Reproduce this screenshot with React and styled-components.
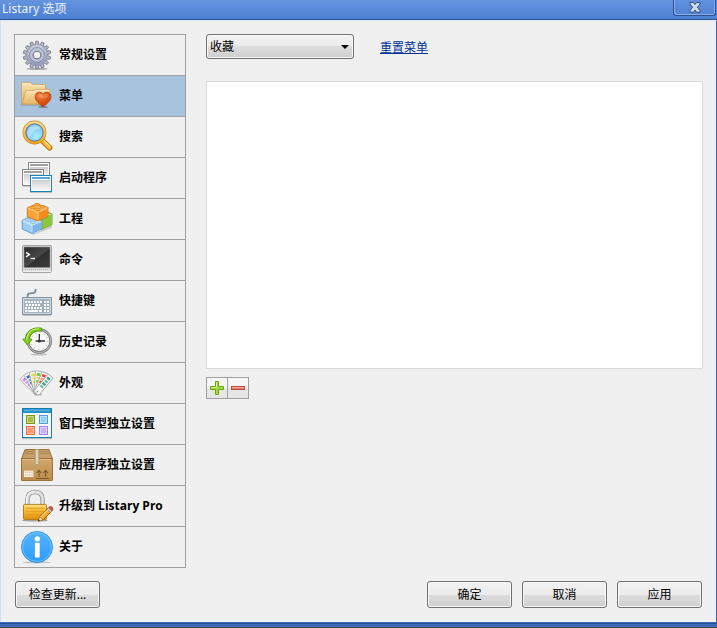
import React, { useState } from 'react';
import styled, { createGlobalStyle } from 'styled-components';

const GlobalStyle = createGlobalStyle`
    * {
        box-sizing:border-box;
    }
    body {
        margin:0;
        background:#f0f0f0;
        color:#000;
        font-family:"Noto Sans", "Noto Sans CJK SC", sans-serif;
        font-size:12px;
        line-height:16px;
    }
    button, select {
        font-family:inherit;
        font-size:12px;
        line-height:16px;
        color:#000;
    }
`;
const Window = styled.div`
    min-height:100vh;
    display:flex;
    flex-direction:column;
`;
const TitleBar = styled.header`
    height:20px;
    display:flex;
    justify-content:space-between;
    align-items:flex-start;
    padding:0 1px 0 2px;
    background:linear-gradient(#6594df, #4e80d2);
    border-bottom:1px solid #2f5596;
`;
const Title = styled.h1`
    margin:0;
    font-size:12px;
    line-height:18px;
    font-weight:400;
    color:#edf3ff;
`;
const CloseButton = styled.button`
    width:43px;
    height:16px;
    display:flex;
    justify-content:center;
    align-items:center;
    padding:0;
    background:linear-gradient(#6191dd, #5284d4);
    border:1px solid #2d5191;
    border-top:0;
    border-radius:0 0 3px 3px;
    box-shadow:inset 1px -1px 0 #86abe8, inset -1px 0 0 #86abe8;
`;
const Content = styled.div`
    flex:1;
    display:flex;
    flex-direction:column;
    gap:13px;
    padding:13px 13px 14px;
    border-top:1px solid #dfe9f8;
    border-left:1px solid #cfe0f8;
    border-right:1px solid #3a6bb8;
`;
const Columns = styled.div`
    flex:1;
    display:grid;
    grid-template-columns:172px 1fr;
    align-items:start;
    column-gap:20px;
`;
const SideNav = styled.nav`
    border:1px solid #a0a0a0;
    border-bottom:0;
`;
const NavItem = styled.button`
    width:100%;
    height:41px;
    display:flex;
    align-items:center;
    gap:6px;
    padding:0 0 0 6px;
    border:0;
    border-bottom:1px solid #a0a0a0;
    background:${props => props.$active ? "#a8c3dd" : "#f0f0f0"};
    font-family:"Open Sans", "Noto Sans CJK SC", sans-serif;
    font-weight:700;
    text-align:left;
    white-space:nowrap;
`;
const NavIcon = styled.svg`
    flex:none;
    width:32px;
    height:32px;
    overflow:visible;
`;
const Panel = styled.main`
    display:flex;
    flex-direction:column;
`;
const Toolbar = styled.div`
    display:flex;
    align-items:center;
    gap:26px;
    margin-bottom:22px;
`;
const SelectBox = styled.div`
    width:148px;
    display:grid;
    align-items:center;
`;
const Select = styled.select`
    grid-area:1 / 1;
    width:100%;
    height:25px;
    appearance:none;
    padding:1px 20px 0 3px;
    border:1px solid #707070;
    border-radius:3px;
    background:linear-gradient(#f2f2f2 0%, #ebebeb 50%, #dddddd 50%, #cfcfcf 100%);
    box-shadow:inset 0 0 0 1px #f8f8f8;
`;
const SelectArrow = styled.svg`
    grid-area:1 / 1;
    justify-self:end;
    width:8px;
    height:4px;
    margin-right:5px;
    pointer-events:none;
`;
const ResetLink = styled.a`
    padding-top:2px;
    color:#003399;
    text-decoration:underline;
    text-underline-offset:1px;
`;
const ItemList = styled.div`
    min-height:288px;
    background:#fff;
    border:1px solid #dadada;
`;
const ListActions = styled.div`
    width:43px;
    display:flex;
    margin-top:8px;
    border:1px solid #a0a0a0;
`;
const ListButton = styled.button`
    flex:1;
    height:20px;
    display:flex;
    align-items:center;
    justify-content:center;
    padding:0;
    border:0;
    background:linear-gradient(#f6f6f6 50%, #e6e6e6 50%);
    & + & {
        border-left:1px solid #a0a0a0;
    }
`;
const Footer = styled.footer`
    display:flex;
    justify-content:space-between;
    padding:0 1px;
`;
const FooterGroup = styled.div`
    display:flex;
    gap:10px;
`;
const PushButton = styled.button`
    width:85px;
    height:27px;
    padding:0;
    border:1px solid #707070;
    border-radius:3px;
    background:linear-gradient(#f2f2f2 0%, #ebebeb 50%, #dddddd 50%, #cfcfcf 100%);
    box-shadow:inset 0 0 0 1px #f8f8f8;
`;
const WindowEdge = styled.div`
    height:6px;
    background:linear-gradient(#3c6cb9 1px, #274f94 1px, #274f94 2px, #3c6cb9 2px);
    border-bottom:1px solid #454545;
`;

const GearIcon = () => {
    const teeth = Array.from({ length: 14 }, (_, i) => i * 360 / 14);
    return (
        <NavIcon viewBox="0 0 32 32" aria-hidden="true">
            <defs>
                <linearGradient id="gear" x1="0" y1="0" x2="0" y2="1">
                    <stop offset="0" stopColor="#cdd1dc"/>
                    <stop offset="1" stopColor="#8f98b5"/>
                </linearGradient>
            </defs>
            <ellipse cx="16" cy="29.8" rx="11" ry="1.3" fill="#666" opacity=".5"/>
            {teeth.map(a => (
                <path key={a} d="M14 6.4 L14.8 2.2 H17.2 L18 6.4 Z" fill="#b0b6c7" stroke="#747a8c" strokeWidth=".8" transform={`rotate(${a} 16 16)`}/>
            ))}
            <circle cx="16" cy="16" r="10.4" fill="url(#gear)" stroke="#8f96ab" strokeWidth=".6"/>
            <circle cx="16" cy="16" r="7.4" fill="none" stroke="#7d87a8" strokeWidth=".9"/>
            <circle cx="16" cy="16" r="5.8" fill="none" stroke="#bfc6d9" strokeWidth="1.8"/>
            <circle cx="16" cy="16" r="3.8" fill="#f0f0f0" stroke="#757a88" strokeWidth="1.1"/>
        </NavIcon>
    )
}
const FolderIcon = () => (
    <NavIcon viewBox="0 0 32 32" aria-hidden="true">
        <defs>
            <linearGradient id="folder" x1="0" y1="0" x2="0" y2="1">
                <stop offset="0" stopColor="#fbe3b0"/>
                <stop offset="1" stopColor="#e3b566"/>
            </linearGradient>
            <radialGradient id="heart" cx=".4" cy=".25" r=".8">
                <stop offset="0" stopColor="#f08a45"/>
                <stop offset=".5" stopColor="#dc5616"/>
                <stop offset="1" stopColor="#b93a06"/>
            </radialGradient>
        </defs>
        <path d="M-1 24.5 H22 V25.5 H0 Z" fill="#5e7d9a" opacity=".6"/>
        <path d="M.6 23.8 V3.3 Q.6 2.4 1.5 2.4 H9.5 L11.4 4.6 H23.6 Q24.6 4.6 24.6 5.6 V23.8 Z" fill="url(#folder)" stroke="#d4a35c" strokeWidth=".9"/>
        <path d="M1.6 3.6 H9 L11 5.6 H23.6" fill="none" stroke="#fff0cc" strokeWidth=".9"/>
        <path d="M1 24.2 L4.6 10.6 H13 L14.4 9.4 H29.4 L26 24.2 Z" fill="url(#folder)" stroke="#cf9d55" strokeWidth=".8"/>
        <path d="M5.4 11.6 H13.4 L14.8 10.4 H28.4" fill="none" stroke="#fff0cc" strokeWidth=".9"/>
        <ellipse cx="22" cy="27" rx="5" ry="1" fill="#444" opacity=".45"/>
        <path d="M22 27 C19 24.2 14.1 21.2 14.1 16.7 C14.1 11.8 20 10.6 22 14.2 C24 10.6 30 11.8 30 16.7 C30 21.2 25 24.2 22 27 Z" fill="url(#heart)" stroke="#b94312" strokeWidth=".7"/>
        <path d="M15.6 16.5 Q16 13.6 18.5 13.6 Q21 14 22 16.6 Q23.5 13.6 26 13.6 Q28.4 14 28.5 16.5 Q22 19.5 15.6 16.5 Z" fill="#fff" opacity=".15"/>
    </NavIcon>
)
const SearchIcon = () => (
    <NavIcon viewBox="0 0 32 32" aria-hidden="true">
        <defs>
            <radialGradient id="lens" cx=".6" cy=".7" r=".7">
                <stop offset="0" stopColor="#a9ecff"/>
                <stop offset="1" stopColor="#6ab4f1"/>
            </radialGradient>
            <linearGradient id="ring" x1="0" y1="0" x2="0" y2="1">
                <stop offset="0" stopColor="#ffd983"/>
                <stop offset="1" stopColor="#f2a31c"/>
            </linearGradient>
        </defs>
        <path d="M21.2 19.4 L28.6 26.8" stroke="#b57418" strokeWidth="5.6" strokeLinecap="round"/>
        <path d="M21.2 19.2 L28.4 26.4" stroke="#ffb52e" strokeWidth="4" strokeLinecap="round"/>
        <path d="M22.4 19.2 L29 25.8" stroke="#ffe39a" strokeWidth="1.2" strokeLinecap="round"/>
        <path d="M19.8 17.8 L21.8 19.8" stroke="#8b8b8b" strokeWidth="3"/>
        <circle cx="13.5" cy="11.5" r="10.2" fill="url(#lens)" stroke="#b98732" strokeWidth="3.4"/>
        <circle cx="13.5" cy="11.5" r="10.2" fill="none" stroke="url(#ring)" strokeWidth="2.3"/>
        <circle cx="13.5" cy="11.5" r="8.6" fill="none" stroke="#4a7dad" strokeWidth=".9"/>
        <path d="M6.3 12 Q6.3 4.6 13.5 4.2 Q18 4.4 19.6 7.8 Q11.5 8 8.8 16.5 Q6.6 15 6.3 12 Z" fill="#fff" opacity=".35"/>
    </NavIcon>
)
const WindowsIcon = () => (
    <NavIcon viewBox="0 0 32 32" aria-hidden="true">
        <defs>
            <linearGradient id="pane" x1="0" y1="0" x2="0" y2="1">
                <stop offset="0" stopColor="#cfcfcf"/>
                <stop offset="1" stopColor="#f8f8f8"/>
            </linearGradient>
        </defs>
        <rect x="7.5" y=".5" width="21" height="16" fill="#fff" stroke="#868686"/>
        <rect x="9" y="2" width="18" height="2" fill="#a2a2a2"/>
        <rect x="9" y="5" width="18" height="10" fill="url(#pane)"/>
        <rect x="1.5" y="7.5" width="21" height="16" fill="#fff" stroke="#868686"/>
        <rect x="3" y="9" width="18" height="2" fill="#a2a2a2"/>
        <rect x="3" y="12" width="18" height="10" fill="url(#pane)"/>
        <path d="M2 24.5 H9" stroke="#000" opacity=".15"/>
        <rect x="9.5" y="13.5" width="21" height="16" fill="#fff" stroke="#1d83b8"/>
        <rect x="11" y="15" width="18" height="2" fill="#55a9d8"/>
        <rect x="11" y="18" width="18" height="10" fill="url(#pane)"/>
        <path d="M9 30.5 H31" stroke="#000" opacity=".2"/>
    </NavIcon>
)
const BricksIcon = () => (
    <NavIcon viewBox="0 0 32 32" aria-hidden="true">
        <path d="M2 27 L11 31 L31 22 L31 25 L12 32 Z" fill="#000" opacity=".15"/>
        <path d="M17 11 L25 8.4 L31 11 V21.6 L20 26.6 Z" fill="#8fc63a" stroke="#5c9320" strokeWidth=".8"/>
        <path d="M20 16.4 L31 11.4 V21.6 L20 26.6 Z" fill="#8cc63c"/>
        <path d="M23 11.8 L27.4 10 L30.4 11.2 L25 13.8 Z" fill="#c8ea90"/>
        <path d="M1.2 17.4 L9.6 13.4 L21 18 V25.6 L11 30.4 L1.2 26 Z" fill="#9ccdf5" stroke="#4a8ac2" strokeWidth=".8"/>
        <path d="M1.6 17.6 L9.6 14 L20.6 18.2 L11 22 Z" fill="#c9e5fb"/>
        <path d="M11 22 L20.6 18.3 V25.4 L11 30 Z" fill="#7bb5ea"/>
        <ellipse cx="7" cy="17" rx="2.8" ry="1.4" fill="#b4dafa" stroke="#6aa9dd" strokeWidth=".6"/>
        <ellipse cx="12.3" cy="19.2" rx="2.8" ry="1.4" fill="#b4dafa" stroke="#6aa9dd" strokeWidth=".6"/>
        <path d="M1.8 18.2 L11 22.4 L20.4 18.6 M11 22.4 V29.4" fill="none" stroke="#e2f2ff" strokeWidth=".7"/>
        <path d="M6.3 4.8 L15.4 .8 L27 4.4 V13.4 L17 18 L6.3 14 Z" fill="#fba437" stroke="#c56a10" strokeWidth=".8"/>
        <path d="M6.8 5 L15.4 1.4 L26.6 4.6 L17 9 Z" fill="#ffbd62"/>
        <path d="M17 9 L26.6 4.8 V13.2 L17 17.6 Z" fill="#f28c1d"/>
        <ellipse cx="11.6" cy="4.6" rx="2.6" ry="1.3" fill="#ffb04a" stroke="#d27a1a" strokeWidth=".7"/>
        <ellipse cx="16" cy="1.7" rx="2.6" ry="1.3" fill="#ffb04a" stroke="#d27a1a" strokeWidth=".7"/>
        <ellipse cx="21.4" cy="3.8" rx="2.6" ry="1.3" fill="#ffb04a" stroke="#d27a1a" strokeWidth=".7"/>
        <ellipse cx="16.8" cy="6.4" rx="2.6" ry="1.3" fill="#ffb04a" stroke="#d27a1a" strokeWidth=".7"/>
        <path d="M7 5.4 L17 9.4 L26.4 5.2 M17 9.4 V17.2" fill="none" stroke="#ffd596" strokeWidth=".8"/>
    </NavIcon>
)
const TerminalIcon = () => (
    <NavIcon viewBox="0 0 32 32" aria-hidden="true">
        <defs>
            <linearGradient id="screen" x1="0" y1="0" x2="1" y2="1">
                <stop offset="0" stopColor="#2a2a2a"/>
                <stop offset=".5" stopColor="#484848"/>
                <stop offset=".55" stopColor="#303030"/>
                <stop offset="1" stopColor="#3b3b3b"/>
            </linearGradient>
        </defs>
        <rect x="1.5" y="1.5" width="29" height="27" rx="1.5" fill="#dadada" stroke="#a6a6a6"/>
        <rect x="3" y="3" width="26" height="20.5" fill="url(#screen)" stroke="#8a8a8a" strokeWidth=".6"/>
        <path d="M4 25.5 H28" stroke="#b4b4b4" strokeDasharray="1 1"/>
        <path d="M2 27.3 H30" stroke="#f6f6f6"/>
        <path d="M5 8.4 L8.4 10.6 L5 12.8" fill="none" stroke="#fff" strokeWidth="1.4"/>
        <path d="M9.6 14.5 H14" stroke="#fff" strokeWidth="1.3"/>
    </NavIcon>
)
const KeyboardIcon = () => (
    <NavIcon viewBox="0 0 32 32" aria-hidden="true">
        <path d="M6.6 12 V10.4 Q6.6 8.6 9 8.4 L12.2 8.2 Q14.6 8 14.6 4" fill="none" stroke="#7e8a92" strokeWidth="1.8"/>
        <rect x="1.5" y="12.5" width="29" height="17" fill="#a5b4be" stroke="#8495a1"/>
        <rect x="2.5" y="13.5" width="27" height="15" fill="none" stroke="#cfd9df"/>
        <path d="M2 30.6 H30" stroke="#000" opacity=".2"/>
        <path d="M4 17 H21 M5 20 H20 M4 23 H21" stroke="#fff" strokeWidth="2" strokeDasharray="2 1"/>
        <path d="M4 26 H6.4 M7.4 26 H17 M18 26 H21" stroke="#fff" strokeWidth="1.8"/>
        <path d="M23 17 H28 M23 20 H28 M23 23 H28 M23 26 H28" stroke="#fff" strokeWidth="2" strokeDasharray="2 1"/>
        <path d="M22 15 V28" stroke="#8fa0ac" strokeWidth=".9"/>
    </NavIcon>
)
const HistoryIcon = () => (
    <NavIcon viewBox="0 0 32 32" aria-hidden="true">
        <ellipse cx="18" cy="28.4" rx="8" ry="1.2" fill="#000" opacity=".2"/>
        <circle cx="18.3" cy="15" r="11.4" fill="#f6f6f6" stroke="#777" strokeWidth="2.6"/>
        <circle cx="18.3" cy="15" r="11.4" fill="none" stroke="#b9b9b9" strokeWidth="1.1"/>
        <circle cx="18.3" cy="15" r="8.4" fill="none" stroke="#909090" strokeWidth="1" strokeDasharray=".8 3.6"/>
        <path d="M18.3 8 V15 M14.6 15 H24" fill="none" stroke="#333" strokeWidth="1.3"/>
        <circle cx="18.3" cy="15" r="1.6" fill="#333"/>
        <path d="M20.8 2.2 C11.6 .6 4.6 5.2 4.4 13.2 L1.8 13.2 L6.4 19 L11 13.2 L8.2 13.2 C8.6 7.8 13 4.6 20.8 4.8 Z" fill="#86cf18" stroke="#4a9a08" strokeWidth=".9"/>
        <path d="M18 3 C11 2.4 6.2 6.4 5.8 13.8" fill="none" stroke="#cff27a" strokeWidth="1"/>
    </NavIcon>
)
const swatches = [
    { angle: -46, color: "#e07bd8", alt: "#c79ae6" },
    { angle: -30, color: "#4b63d8", alt: "#6fa0ea" },
    { angle: -14, color: "#f4dc2c", alt: "#f2ee7b" },
    { angle: 4, color: "#79cc22", alt: "#f2e24a" },
    { angle: 22, color: "#ee3d3d", alt: "#f58b7a" },
    { angle: 40, color: "#3fa682", alt: "#5fbf9d" },
];
const SwatchIcon = () => (
    <NavIcon viewBox="0 0 32 32" aria-hidden="true">
        <ellipse cx="17" cy="27.4" rx="4" ry="1.2" fill="#000" opacity=".25"/>
        {swatches.map(s => (
            <g key={s.angle} transform={`rotate(${s.angle} 16 25)`}>
                <rect x="13" y="4" width="6.4" height="22.6" rx="1" fill="#fafafa" stroke="#9da3a3" strokeWidth=".8"/>
                <path d="M14.4 7.4 H18 M14.4 14.4 H18" stroke={s.color} strokeWidth="2.6"/>
                <path d="M14.4 11 H18 M14.4 17.8 H18" stroke={s.alt} strokeWidth="2.2"/>
            </g>
        ))}
        <circle cx="16.4" cy="24.6" r=".9" fill="#999"/>
    </NavIcon>
)
const tiles = [
    { x: 5.5, y: 7.5, fill: "#a9bf45", stroke: "#7b9a11" },
    { x: 18.5, y: 7.5, fill: "#93cdf8", stroke: "#4a9fe0" },
    { x: 5.5, y: 18.5, fill: "#ff9673", stroke: "#f0683c" },
    { x: 18.5, y: 18.5, fill: "#c9b1fb", stroke: "#a183ee" },
];
const WindowTypeIcon = () => (
    <NavIcon viewBox="0 0 32 32" aria-hidden="true">
        <path d="M1 30.7 H31" stroke="#000" opacity=".25"/>
        <rect x="1.5" y=".5" width="29" height="29" fill="#f7f7fb" stroke="#177db0"/>
        <rect x="2" y="1" width="28" height="4" fill="#2592cc"/>
        <path d="M3 2.2 H29" stroke="#71bee6"/>
        {tiles.map(t => (
            <g key={t.fill}>
                <rect x={t.x} y={t.y} width="8" height="8" fill={t.fill} stroke={t.stroke}/>
                <rect x={t.x + 1} y={t.y + 1} width="6" height="6" fill="none" stroke="#fff" strokeOpacity=".4"/>
            </g>
        ))}
    </NavIcon>
)
const BoxIcon = () => (
    <NavIcon viewBox="0 0 32 32" aria-hidden="true">
        <defs>
            <linearGradient id="carton" x1="0" y1="0" x2="0" y2="1">
                <stop offset="0" stopColor="#d0a870"/>
                <stop offset="1" stopColor="#bd8c4c"/>
            </linearGradient>
        </defs>
        <path d="M4 .5 H28 L31.5 10 H.5 Z" fill="#c8a06c" stroke="#91662f" strokeWidth=".9"/>
        <path d="M4 2.6 H28 M3.4 4.6 H28.6" stroke="#a27a46" strokeWidth=".7"/>
        <rect x=".5" y="9.7" width="31" height="21.8" rx=".6" fill="url(#carton)" stroke="#91662f" strokeWidth=".9"/>
        <path d="M1.2 10.6 H30.8" stroke="#e2bf8c"/>
        <path d="M14.2 .5 H17.8 V14.6 L17 16 L16 15.2 L15 16 L14.2 15 Z" fill="#ded0b5" stroke="#a58a62" strokeWidth=".6"/>
        <rect x="3" y="21.6" width="9.4" height="6.4" fill="#f7efe2"/>
        <path d="M4 23.2 H11.5 M4 26 H11.5" stroke="#c9b596" strokeDasharray="1.4 .7"/>
        <path d="M15 29.5 H28 M18 28 V22 M24.6 28 V22 M15.6 24 L18 21.4 L20.4 24 M22.2 24 L24.6 21.4 L27 24" fill="none" stroke="#7e5829" strokeWidth="1.1"/>
    </NavIcon>
)
const LockIcon = () => (
    <NavIcon viewBox="0 0 32 32" aria-hidden="true">
        <defs>
            <linearGradient id="lock" x1="0" y1="0" x2="0" y2="1">
                <stop offset="0" stopColor="#ffd767"/>
                <stop offset=".5" stopColor="#f9b52c"/>
                <stop offset="1" stopColor="#e18c0c"/>
            </linearGradient>
        </defs>
        <ellipse cx="14" cy="30.4" rx="13" ry="1.2" fill="#000" opacity=".3"/>
        <path d="M6.4 15 V10 Q6.4 2 14 2 Q21.6 2 21.6 10 V15" fill="none" stroke="#8e8e8e" strokeWidth="4.4"/>
        <path d="M6.4 15 V10 Q6.4 2 14 2 Q21.6 2 21.6 10 V15" fill="none" stroke="#dedede" strokeWidth="2.8"/>
        <path d="M5.6 14 V10 Q5.8 1.4 14 1.4" fill="none" stroke="#fff" strokeWidth=".9"/>
        <rect x="2.5" y="14.4" width="23" height="15.2" rx="1.2" fill="url(#lock)" stroke="#b4730f" strokeWidth=".9"/>
        <path d="M5 18.4 H23 M5 21.4 H23 M5 24.4 H21 M5 27.2 H18" stroke="#de9a22" strokeWidth=".8"/>
        <path d="M3.4 15.6 H24.6" stroke="#fff0b0" strokeWidth=".8"/>
        <path d="M17.2 31.2 L18.6 26.6 L27 18 L30.6 21.4 L22 30 Z" fill="#f5a623" stroke="#8f5a0c" strokeWidth=".8"/>
        <path d="M19.8 27.2 L27.6 19.4" stroke="#ffdf8a" strokeWidth="1.2"/>
        <path d="M17.2 31.2 L18.6 26.6 L22 30 Z" fill="#f3dcae" stroke="#8f5a0c" strokeWidth=".5"/>
        <path d="M17.2 31.2 L17.8 29.4 L19 30.6 Z" fill="#222"/>
        <path d="M26 19 L27.6 17.4 L31.2 20.8 L29.6 22.4 Z" fill="#c8c8c8" stroke="#777" strokeWidth=".5"/>
        <path d="M27.6 17.4 Q29.4 15.6 31.2 17.2 Q32.8 19 31.2 20.8 Z" fill="#d9543c" stroke="#96301d" strokeWidth=".6"/>
    </NavIcon>
)
const InfoIcon = () => (
    <NavIcon viewBox="0 0 32 32" aria-hidden="true">
        <defs>
            <linearGradient id="info" x1="0" y1="0" x2="0" y2="1">
                <stop offset="0" stopColor="#55b4fb"/>
                <stop offset="1" stopColor="#2c9cfa"/>
            </linearGradient>
        </defs>
        <ellipse cx="16" cy="31.4" rx="14" ry="1" fill="#000" opacity=".18"/>
        <circle cx="16" cy="16" r="15.5" fill="url(#info)" stroke="#2f8fe0" strokeWidth=".9"/>
        <circle cx="16" cy="16" r="14.4" fill="none" stroke="#7cc7ff" strokeWidth=".8"/>
        <circle cx="16.3" cy="7.8" r="2.6" fill="#fff"/>
        <rect x="13.9" y="11.8" width="4.8" height="14.8" rx=".8" fill="#fff"/>
    </NavIcon>
)

const menuItems = [
    { label: "常规设置", Icon: GearIcon },
    { label: "菜单", Icon: FolderIcon },
    { label: "搜索", Icon: SearchIcon },
    { label: "启动程序", Icon: WindowsIcon },
    { label: "工程", Icon: BricksIcon },
    { label: "命令", Icon: TerminalIcon },
    { label: "快捷键", Icon: KeyboardIcon },
    { label: "历史记录", Icon: HistoryIcon },
    { label: "外观", Icon: SwatchIcon },
    { label: "窗口类型独立设置", Icon: WindowTypeIcon },
    { label: "应用程序独立设置", Icon: BoxIcon },
    { label: "升级到 Listary Pro", Icon: LockIcon },
    { label: "关于", Icon: InfoIcon },
];

const App = () => {
    const [active, setActive] = useState("菜单");
    return (
        <Window lang="zh-CN">
            <GlobalStyle/>
            <TitleBar>
                <Title>Listary 选项</Title>
                <CloseButton type="button" aria-label="关闭">
                    <svg width="12" height="11" viewBox="0 0 12 11" aria-hidden="true">
                        <path d="M1 .5 H4.4 L6 2.6 L7.6 .5 H11 V2 L8.4 5.3 L11 8.6 V10.2 H7.6 L6 8 L4.4 10.2 H1 V8.6 L3.6 5.3 L1 2 Z" fill="#cfdcf2" stroke="#2a456f" strokeWidth=".9"/>
                    </svg>
                </CloseButton>
            </TitleBar>
            <Content>
                <Columns>
                    <SideNav>
                        {menuItems.map(({ label, Icon }) => (
                            <NavItem key={label} type="button" $active={label === active} onClick={() => setActive(label)}>
                                <Icon/>
                                {label}
                            </NavItem>
                        ))}
                    </SideNav>
                    <Panel>
                        <Toolbar>
                            <SelectBox>
                                <Select aria-label="菜单" defaultValue="收藏">
                                    <option>收藏</option>
                                </Select>
                                <SelectArrow viewBox="0 0 8 4" aria-hidden="true">
                                    <path d="M0 0 H8 L4 4 Z"/>
                                </SelectArrow>
                            </SelectBox>
                            <ResetLink href="#">重置菜单</ResetLink>
                        </Toolbar>
                        <ItemList/>
                        <ListActions>
                            <ListButton type="button" aria-label="添加">
                                <svg width="14" height="14" viewBox="0 0 14 14" aria-hidden="true">
                                    <path d="M5.5 .5 H8.5 V5.5 H13.5 V8.5 H8.5 V13.5 H5.5 V8.5 H.5 V5.5 H5.5 Z" fill="#a6d83c" stroke="#6aa512"/>
                                    <path d="M6.5 1.5 V6.5 H1.5" fill="none" stroke="#d9f58f"/>
                                </svg>
                            </ListButton>
                            <ListButton type="button" aria-label="删除">
                                <svg width="14" height="4" viewBox="0 0 14 4" aria-hidden="true">
                                    <rect x=".5" y=".5" width="13" height="3" fill="#ea7a62" stroke="#c04a36"/>
                                    <path d="M1 1.5 H13" stroke="#f6b3a2"/>
                                </svg>
                            </ListButton>
                        </ListActions>
                    </Panel>
                </Columns>
                <Footer>
                    <FooterGroup>
                        <PushButton type="button">检查更新...</PushButton>
                    </FooterGroup>
                    <FooterGroup>
                        <PushButton type="button">确定</PushButton>
                        <PushButton type="button">取消</PushButton>
                        <PushButton type="button">应用</PushButton>
                    </FooterGroup>
                </Footer>
            </Content>
            <WindowEdge/>
        </Window>
    )
}
export default App;
